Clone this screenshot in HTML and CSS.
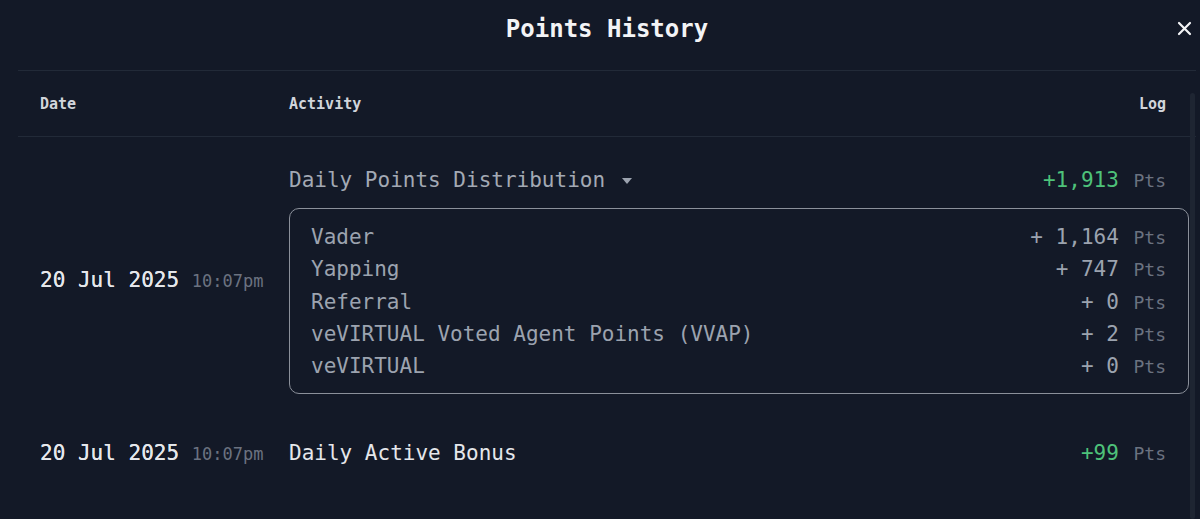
FILE: index.html
```html
<!DOCTYPE html>
<html lang="en">
<head>
  <meta charset="UTF-8">
  <meta name="viewport" content="width=device-width, initial-scale=1.0">
  <title>Points History</title>
  <link rel="stylesheet" href="styles.css">
</head>
<body>
  <div class="modal">
    <div class="modal-head">
      <h2>Points History</h2>
      <button class="close">
        <svg width="15" height="15" viewBox="0 0 15 15"><path d="M2 2 L13 13 M13 2 L2 13" stroke="#f3f4f6" stroke-width="2.2" stroke-linecap="round"/></svg>
      </button>
    </div>

    <div class="table-head">
      <span>Date</span>
      <span>Activity</span>
      <span class="right">Log</span>
    </div>

    <div class="table-body">
      <div class="row first">
        <div class="date">20 Jul 2025 <span class="time">10:07pm</span></div>
        <div class="activity">
          <div class="activity-title">
            <span class="muted">Daily Points Distribution
              <svg class="caret" width="10" height="6" viewBox="0 0 10 6"><path d="M0 0 H10 L5 6 Z" fill="#9ca3af"/></svg>
            </span>
            <span class="amount green">+1,913 <span class="pts">Pts</span></span>
          </div>
          <div class="breakdown">
            <div class="line"><span>Vader</span><span>+ 1,164 <span class="pts">Pts</span></span></div>
            <div class="line"><span>Yapping</span><span>+ 747 <span class="pts">Pts</span></span></div>
            <div class="line"><span>Referral</span><span>+ 0 <span class="pts">Pts</span></span></div>
            <div class="line"><span>veVIRTUAL Voted Agent Points (VVAP)</span><span>+ 2 <span class="pts">Pts</span></span></div>
            <div class="line"><span>veVIRTUAL</span><span>+ 0 <span class="pts">Pts</span></span></div>
          </div>
        </div>
      </div>

      <div class="row">
        <div class="date">20 Jul 2025 <span class="time">10:07pm</span></div>
        <div class="activity">
          <div class="activity-title">
            <span class="bright">Daily Active Bonus</span>
            <span class="amount green">+99 <span class="pts">Pts</span></span>
          </div>
        </div>
      </div>
    </div>

    <div class="scrollbar"></div>
  </div>
</body>
</html>
```

FILE: styles.css
```css
body {
  margin: 0;
  background: #131927;
  font-family: "DejaVu Sans Mono", "Liberation Mono", monospace;
  color: #e5e7eb;
  overflow: hidden;
}

.modal {
  position: relative;
  margin-left: 18px;
  width: 1178px;
  height: 519px;
}

.modal-head {
  height: 70px;
  display: flex;
  align-items: center;
  justify-content: center;
  border-bottom: 1px solid #222a38;
  position: relative;
}

.modal-head h2 {
  margin: 0 0 12px;
  font-size: 24px;
  font-weight: bold;
  color: #f3f4f6;
}

.close {
  position: absolute;
  right: 4px;
  top: 21px;
  background: none;
  border: none;
  padding: 0;
  cursor: pointer;
}

.table-head {
  display: grid;
  grid-template-columns: 249px 1fr auto;
  height: 65px;
  align-items: center;
  padding: 0 30px 0 22px;
  border-bottom: 1px solid #222a38;
  font-size: 15px;
  font-weight: bold;
  color: #d1d5db;
}

.table-body {
  padding: 0 7px 0 22px;
}

.row {
  display: grid;
  grid-template-columns: 249px 1fr;
  align-items: center;
  padding: 23px 0;
}

.row.first {
  padding-top: 29px;
  padding-bottom: 22px;
}

.date {
  font-size: 21px;
  color: #e5e7eb;
  white-space: nowrap;
  text-shadow: 0 0 0.4px #e5e7eb;
}

.time {
  font-size: 17px;
  color: #6b7280;
  text-shadow: none;
}

.activity-title {
  display: flex;
  justify-content: space-between;
  align-items: center;
  font-size: 21px;
  line-height: 28px;
  padding-right: 23px;
}

.muted {
  color: #a3a9b4;
}

.bright {
  color: #e5e7eb;
}

.caret {
  margin-left: 4px;
  vertical-align: middle;
}

.amount {
  white-space: nowrap;
}

.green {
  color: #4ec27a;
}

.pts {
  font-size: 18px;
  line-height: 1;
  color: #6b7280;
  margin-left: 2px;
}

.breakdown {
  margin-top: 14px;
  border: 1.5px solid #8b909a;
  border-radius: 10px;
  padding: 12px 22px 11px 21px;
  font-size: 21px;
  line-height: 32.3px;
  color: #9ca3af;
}

.line {
  display: flex;
  justify-content: space-between;
  height: 32.3px;
}

.scrollbar {
  position: absolute;
  right: 1px;
  top: 93px;
  bottom: 0;
  width: 5px;
  background: #1e2532;
  border-radius: 3px;
}
```
